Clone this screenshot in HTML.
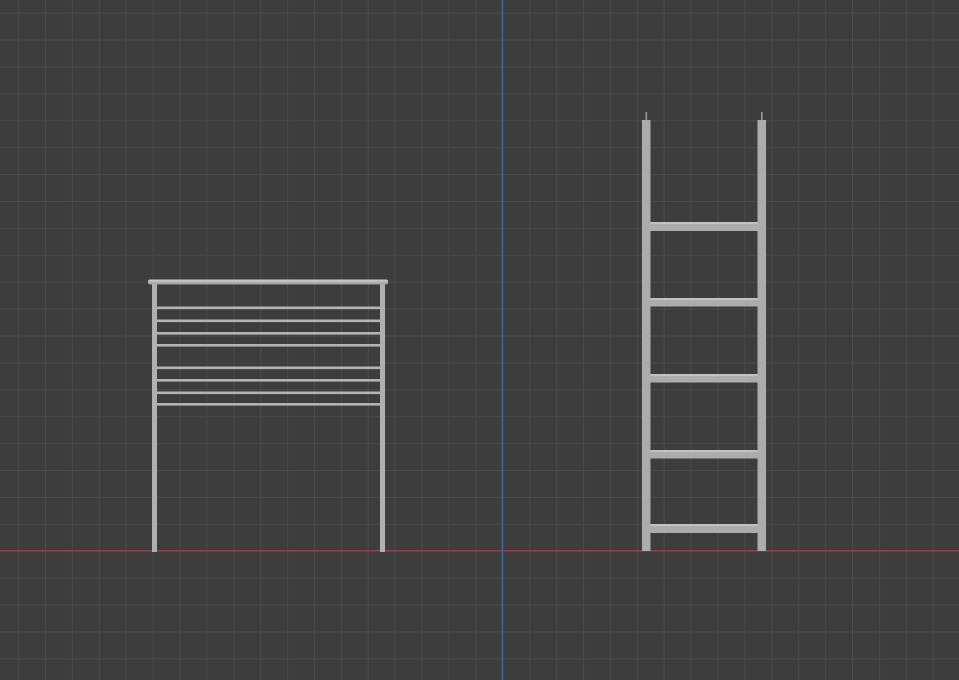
<!DOCTYPE html>
<html><head><meta charset="utf-8"><style>
html,body{margin:0;padding:0;background:#3d3d3d;width:959px;height:680px;overflow:hidden}
svg{display:block}
</style></head><body>
<svg width="959" height="680" viewBox="0 0 959 680" xmlns="http://www.w3.org/2000/svg">
<defs>
<pattern id="g" x="18.1" y="12.7" width="26.9" height="26.9" patternUnits="userSpaceOnUse">
<path d="M0.5 0V26.9M0 0.5H26.9" stroke="#4a4a4a" stroke-width="1" fill="none"/>
</pattern>
<linearGradient id="bar" x1="0" y1="0" x2="0" y2="1">
<stop offset="0" stop-color="#d0d0d0"/><stop offset="1" stop-color="#9a9a9a"/></linearGradient>
</defs>
<rect width="959" height="680" fill="#3d3d3d"/>
<rect width="959" height="680" fill="url(#g)"/>
<line x1="0" y1="550.7" x2="959" y2="550.7" stroke="#9c3a45" stroke-width="1.3"/>
<line x1="502.3" y1="0" x2="502.3" y2="680" stroke="#3d6aa8" stroke-width="1.3"/>
<!-- railing -->
<g fill="#b4b4b4">
<rect x="148" y="279.5" width="240" height="5" rx="2" fill="url(#bar)"/>
<rect x="152" y="284" width="5" height="268" fill="#b0b0b0"/>
<rect x="380" y="284" width="5" height="268" fill="#b0b0b0"/>
<rect x="157" y="306.5" width="223" height="2.6"/>
<rect x="157" y="319.5" width="223" height="2.6"/>
<rect x="157" y="332" width="223" height="2.6"/>
<rect x="157" y="344" width="223" height="2.6"/>
<rect x="157" y="366.5" width="223" height="2.6"/>
<rect x="157" y="379" width="223" height="2.6"/>
<rect x="157" y="391.5" width="223" height="2.6"/>
<rect x="157" y="403" width="223" height="2.6"/>
</g>
<!-- ladder -->
<g fill="#acacac">
<rect x="645.5" y="112" width="1.6" height="9" fill="#999"/>
<rect x="761" y="112" width="1.6" height="9" fill="#999"/>
<rect x="642" y="120" width="8.5" height="431"/>
<rect x="757.5" y="120" width="8.5" height="431"/>
<rect x="650.5" y="222" width="107" height="9"/>
<rect x="650.5" y="298" width="107" height="8.5"/>
<rect x="650.5" y="374" width="107" height="8.5"/>
<rect x="650.5" y="450" width="107" height="8.5"/>
<rect x="650.5" y="524" width="107" height="9"/>
</g>
<g fill="#c2c2c2">
<rect x="650.5" y="222" width="107" height="2"/>
<rect x="650.5" y="298" width="107" height="2"/>
<rect x="650.5" y="374" width="107" height="2"/>
<rect x="650.5" y="450" width="107" height="2"/>
<rect x="650.5" y="524" width="107" height="2"/>
</g>
</svg>
</body></html>
